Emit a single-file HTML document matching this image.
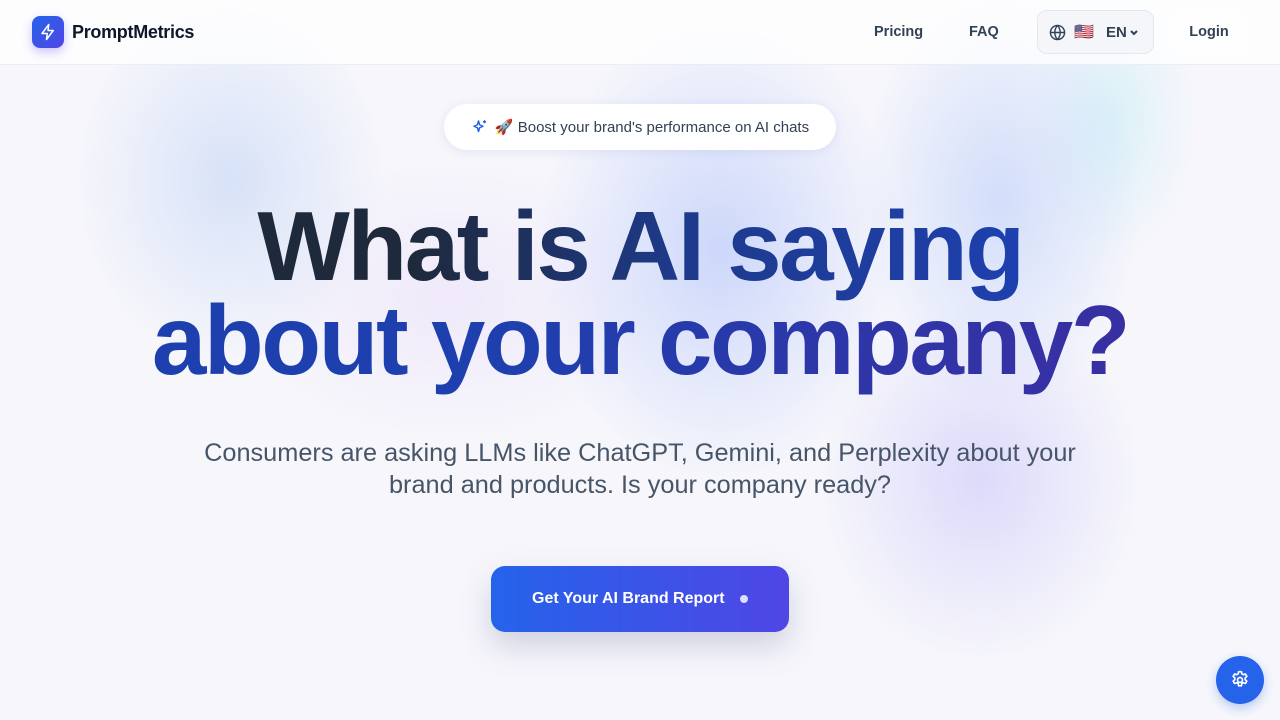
<!DOCTYPE html>
<html><head><meta charset="utf-8"><style>
*{margin:0;padding:0;box-sizing:border-box}
body{width:1280px;height:720px;overflow:hidden;font-family:"Liberation Sans",sans-serif;background:#f6f6fb;position:relative}
.bg{position:absolute;inset:0;background:
radial-gradient(ellipse 220px 260px at 230px 180px,rgba(190,210,245,.55),transparent 70%),
radial-gradient(ellipse 260px 330px at 720px 250px,rgba(170,190,250,.55),transparent 70%),
radial-gradient(ellipse 200px 300px at 1000px 200px,rgba(185,205,250,.6),transparent 70%),
radial-gradient(ellipse 230px 260px at 980px 480px,rgba(200,195,250,.55),transparent 70%),
radial-gradient(ellipse 120px 200px at 1110px 120px,rgba(190,235,245,.5),transparent 70%),
radial-gradient(ellipse 300px 200px at 450px 300px,rgba(235,225,250,.6),transparent 70%);}
nav{position:absolute;top:0;left:0;width:1280px;height:65px;background:rgba(255,255,255,.75);border-bottom:1px solid rgba(230,232,240,.8)}
.logo{position:absolute;left:32px;top:16px;width:32px;height:32px;border-radius:8px;background:linear-gradient(135deg,#2563eb,#4f46e5);box-shadow:0 4px 10px rgba(79,70,229,.3);display:flex;align-items:center;justify-content:center}
.brand{position:absolute;left:72px;top:22px;font-size:18px;font-weight:bold;color:#0f172a;letter-spacing:-.3px}
.nl{position:absolute;top:24px;font-size:14.5px;color:#334155;font-weight:bold}
.lang{position:absolute;left:1037px;top:10px;width:117px;height:44px;border:1px solid #e2e8f0;border-radius:10px;background:#f4f6fa}
.login{position:absolute;left:1170px;top:10px;width:78px;height:44px;border-radius:10px;background:rgba(255,255,255,.6);font-size:14.5px;color:#334155;font-weight:bold;text-align:center;line-height:44px}
.pill{position:absolute;left:444px;top:104px;width:392px;height:46px;border-radius:23px;background:#fff;box-shadow:0 2px 10px rgba(150,160,220,.2);font-size:15px;color:#334155;display:flex;align-items:center;justify-content:center;gap:6px}
h1{position:absolute;left:0;width:1280px;text-align:center;font-size:98px;font-weight:bold;letter-spacing:-2.5px;line-height:94px;top:199px}
h1 span{display:inline-block;padding-bottom:24px;margin-bottom:-24px;-webkit-background-clip:text !important;background-clip:text !important;color:transparent;-webkit-text-fill-color:transparent}
.l1{background-image:linear-gradient(90deg,#1e293b 20%,#1e3a8a 55%,#1e40af 100%)}
.l2{background-image:linear-gradient(90deg,#1e40af 0%,#1e40af 35%,#3730a3 95%)}
.sub{position:absolute;left:0;width:1280px;top:437px;text-align:center;font-size:25.3px;line-height:32px;color:#475569}
.btn{position:absolute;left:491px;top:566px;width:298px;height:66px;border-radius:14px;background:linear-gradient(90deg,#2563eb,#4f46e5);box-shadow:0 14px 30px rgba(100,100,150,.25);color:#fff;font-size:16px;font-weight:bold;line-height:66px;padding-left:41px}
.dot{position:absolute;left:249px;top:29px;width:8px;height:8px;border-radius:50%;background:#dde0fa}
.gear{position:absolute;left:1216px;top:656px;width:48px;height:48px;border-radius:50%;background:#2563eb;display:flex;align-items:center;justify-content:center;box-shadow:0 4px 10px rgba(37,99,235,.3)}
</style></head><body>
<div class="bg"></div>
<nav>
<div class="logo"><svg width="18" height="18" viewBox="0 0 24 24" fill="none" stroke="#fff" stroke-width="2" stroke-linejoin="round"><path d="M13 2L4 14h7l-1 8 9-12h-7z"/></svg></div>
<div class="brand">PromptMetrics</div>
<div class="nl" style="left:874px">Pricing</div>
<div class="nl" style="left:969px">FAQ</div>
<div class="lang">
<svg style="position:absolute;left:11px;top:13px" width="17" height="17" viewBox="0 0 24 24" fill="none" stroke="#334155" stroke-width="2"><circle cx="12" cy="12" r="10"/><path d="M2 12h20M12 2a15 15 0 010 20M12 2a15 15 0 000 20"/></svg>
<span style="position:absolute;left:36px;top:11px;font-size:16px">🇺🇸</span>
<span style="position:absolute;left:68px;top:13px;font-size:15px;font-weight:bold;color:#334155">EN</span>
<svg style="position:absolute;left:91px;top:17px" width="10" height="10" viewBox="0 0 10 10" fill="none" stroke="#334155" stroke-width="2"><path d="M2 3l3 3 3-3"/></svg>
</div>
<div class="login">Login</div>
</nav>
<div class="pill"><svg width="18" height="18" viewBox="0 0 24 24" fill="none" stroke="#2563eb" stroke-width="2" stroke-linejoin="round"><path d="M10 4l1.5 5L16 11l-4.5 2L10 18l-1.5-5L4 11l4.5-2z"/><path d="M18 3v4M16 5h4"/></svg><span>🚀 Boost your brand's performance on AI chats</span></div>
<h1><span class="l1">What is AI saying</span><br><span class="l2">about your company?</span></h1>
<div class="sub">Consumers are asking LLMs like ChatGPT, Gemini, and Perplexity about your<br>brand and products. Is your company ready?</div>
<div class="btn">Get Your AI Brand Report<div class="dot"></div></div>
<div class="gear"><svg width="20" height="20" viewBox="0 0 24 24" fill="none" stroke="#fff" stroke-width="2" stroke-linejoin="round"><path d="M10.3 2h3.4l.5 2.6 1.8 1 2.5-.9 1.7 2.9-2 1.8v2.1l2 1.8-1.7 2.9-2.5-.9-1.8 1-.5 2.7h-3.4l-.5-2.7-1.8-1-2.5.9-1.7-2.9 2-1.8v-2.1l-2-1.8 1.7-2.9 2.5.9 1.8-1z"/><circle cx="12" cy="12" r="3"/></svg></div>
</body></html>
